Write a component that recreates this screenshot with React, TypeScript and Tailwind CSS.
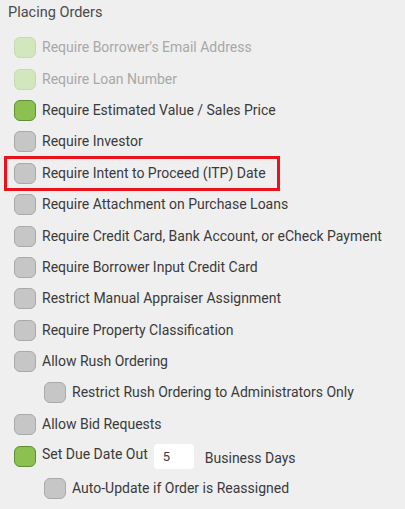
import React from "react";

type Row = {
  label: string;
  state: "off" | "on" | "disabled";
  indent?: boolean;
  highlight?: boolean;
};

const rows: Row[] = [
  { label: "Require Borrower's Email Address", state: "disabled" },
  { label: "Require Loan Number", state: "disabled" },
  { label: "Require Estimated Value / Sales Price", state: "on" },
  { label: "Require Investor", state: "off" },
  { label: "Require Intent to Proceed (ITP) Date", state: "off", highlight: true },
  { label: "Require Attachment on Purchase Loans", state: "off" },
  { label: "Require Credit Card, Bank Account, or eCheck Payment", state: "off" },
  { label: "Require Borrower Input Credit Card", state: "off" },
  { label: "Restrict Manual Appraiser Assignment", state: "off" },
  { label: "Require Property Classification", state: "off" },
  { label: "Allow Rush Ordering", state: "off" },
  { label: "Restrict Rush Ordering to Administrators Only", state: "off", indent: true },
  { label: "Allow Bid Requests", state: "off" },
];

function Box({ state }: { state: Row["state"] }) {
  if (state === "on")
    return <span className="block h-[21px] w-[22px] shrink-0 rounded-[6px] border border-[#5f8f32] bg-[#8cc152]" />;
  if (state === "disabled")
    return <span className="block h-[21px] w-[22px] shrink-0 rounded-[6px] border border-[#c3dcaa] bg-[#d3e7bf]" />;
  return <span className="block h-[21px] w-[22px] shrink-0 rounded-[6px] border border-[#a9a9a9] bg-[#c6c6c6]" />;
}

export default function App() {
  return (
    <div
      className="h-[509px] w-[405px] bg-[#efefef] text-[14px] text-[#3a3a3a]"
      style={{ fontFamily: "Roboto, 'Liberation Sans', sans-serif" }}
    >
      <div className="px-[8px] pt-[4px] text-[14.5px] leading-[18px] text-[#4a4a4a]">Placing Orders</div>
      <div className="flex flex-col pt-[10px]">
        {rows.map((r) => (
          <div key={r.label} className={`flex h-[31.4px] items-center ${r.indent ? "pl-[44px]" : "pl-[14px]"}`}>
            {r.highlight ? (
              <div className="-ml-[10px] flex h-[35px] w-[276px] items-center gap-[6px] border-[3px] border-[#e8131b] pl-[7px]">
                <Box state={r.state} />
                <span>{r.label}</span>
              </div>
            ) : (
              <div className="flex items-center gap-[6px]">
                <Box state={r.state} />
                <span className={r.state === "disabled" ? "text-[#a8a8a8]" : ""}>{r.label}</span>
              </div>
            )}
          </div>
        ))}
        <div className="flex h-[33px] items-center pl-[14px]">
          <Box state="on" />
          <span className="ml-[6px] -mt-[4px]">Set Due Date Out</span>
          <span className="ml-[6px] flex h-[25px] w-[40px] items-center rounded-[4px] bg-white pl-[9px] text-[13px]">5</span>
          <span className="ml-[11px] mt-[3px]">Business Days</span>
        </div>
        <div className="flex h-[31px] items-center pl-[44px]">
          <div className="flex items-center gap-[6px]">
            <Box state="off" />
            <span>Auto-Update if Order is Reassigned</span>
          </div>
        </div>
      </div>
    </div>
  );
}
